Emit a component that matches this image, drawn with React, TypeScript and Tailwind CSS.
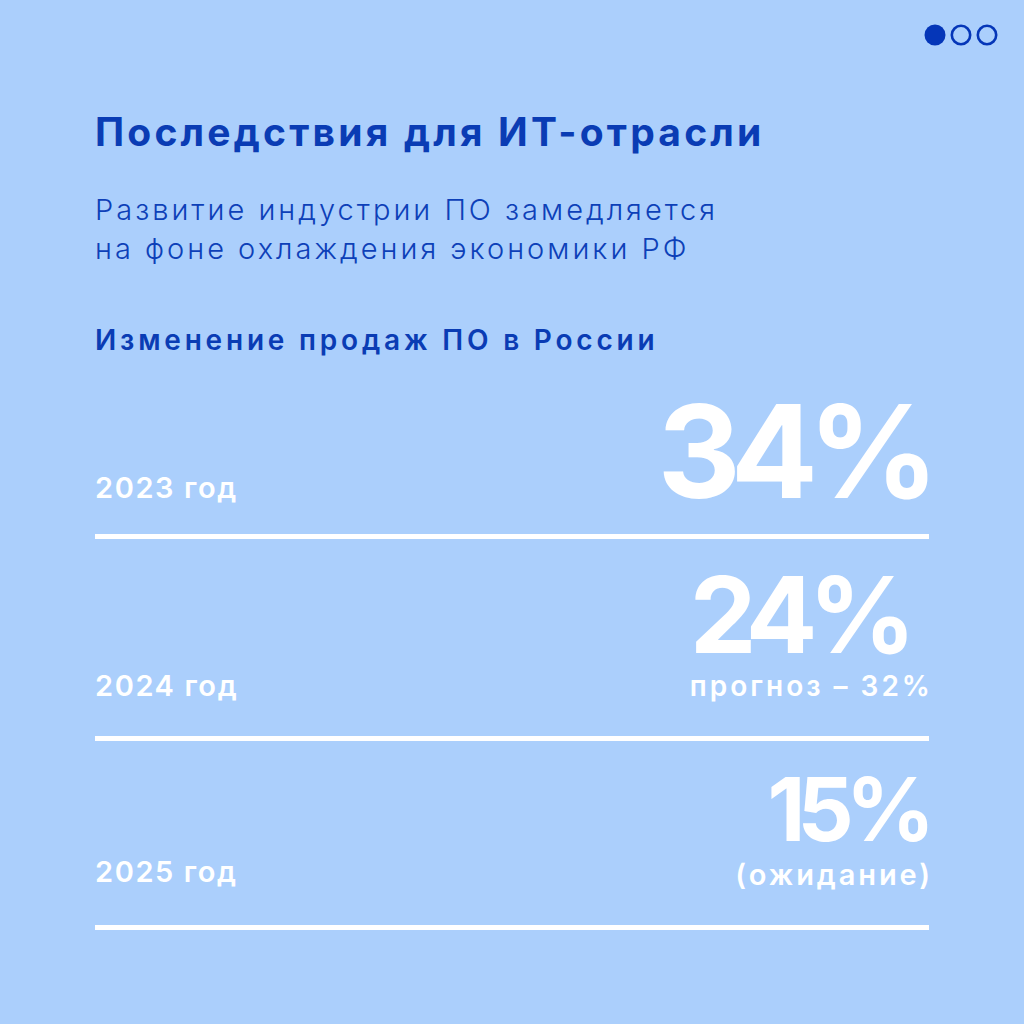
import React from 'react';

const font = { fontFamily: 'Inter, "Noto Sans", sans-serif' };

const Dots: React.FC = () => (
  <svg width="76" height="26" viewBox="0 0 76 26">
    <circle cx="11" cy="13" r="10.5" fill="#0536b8" />
    <circle cx="37" cy="13" r="9.2" fill="none" stroke="#0536b8" strokeWidth="2.6" />
    <circle cx="63" cy="13" r="9.2" fill="none" stroke="#0536b8" strokeWidth="2.6" />
  </svg>
);

export default function App() {
  return (
    <div className="w-[1024px] h-[1024px] bg-[#abcffc] overflow-hidden" style={font}>
      <div className="flex justify-end pt-[22px] pr-[24px]">
        <Dots />
      </div>

      <div className="px-[95px]">
        <h1 className="mt-[64px] text-[39px] leading-none font-bold text-[#0a3cb4] tracking-[3.2px]">
          Последствия для ИТ-отрасли
        </h1>

        <p className="mt-[40px] text-[29px] leading-[38.5px] font-light text-[#0d40b8] tracking-[3px]">
          Развитие индустрии ПО замедляется
          <br />
          на фоне охлаждения экономики РФ
        </p>

        <h2 className="mt-[58px] text-[28px] leading-none font-semibold text-[#0a3cb4] tracking-[3.8px]">
          Изменение продаж ПО в России
        </h2>

        {/* 2023 */}
        <div className="mt-[33px] flex items-baseline justify-between">
          <span className="text-[29px] leading-none font-semibold text-white tracking-[1.6px]">2023 год</span>
          <span className="text-[129px] leading-none font-bold text-white tracking-[-10px]">34%</span>
        </div>
        <div className="mt-[18px] h-[5px] bg-white" />

        {/* 2024 */}
        <div className="mt-[31px] flex items-end justify-between">
          <span className="text-[29px] leading-none font-semibold text-white tracking-[1.6px]">2024 год</span>
          <div className="flex flex-col items-start -mr-[4px]">
            <span className="text-[106px] leading-[0.85] font-bold text-white tracking-[-9px]">24%</span>
            <span className="mt-[12px] text-[28px] leading-none font-semibold text-white tracking-[3px]">
              прогноз – 32%
            </span>
          </div>
        </div>
        <div className="mt-[36px] h-[5px] bg-white" />

        {/* 2025 */}
        <div className="mt-[31px] flex items-end justify-between">
          <span className="text-[29px] leading-none font-semibold text-white tracking-[1.6px] mb-[3px]">2025 год</span>
          <div className="flex flex-col items-end">
            <span className="text-[88px] leading-[0.85] font-bold text-white tracking-[-8px] mr-[2px]">15%</span>
            <span className="mt-[13px] text-[29px] leading-none font-semibold text-white tracking-[2.9px] -mr-[4px]">
              (ожидание)
            </span>
          </div>
        </div>
        <div className="mt-[36px] h-[5px] bg-white" />
      </div>
    </div>
  );
}
